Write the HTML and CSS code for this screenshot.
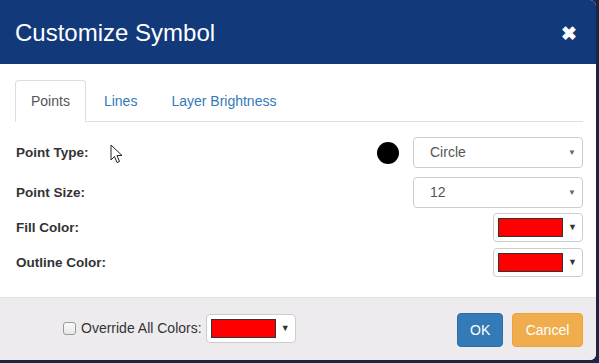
FILE: index.html
```html
<!DOCTYPE html>
<html lang="en">
<head>
    <meta charset="UTF-8">
    <title>Customize Symbol</title>
    <link rel="stylesheet" href="styles.css">
</head>
<body>
    <div class="modal">
        <div class="modal-header">
            <h1>Customize Symbol</h1>
            <span class="close">&#10006;</span>
        </div>

        <div class="modal-body">
            <ul class="tabs">
                <li class="tab active">Points</li>
                <li class="tab">Lines</li>
                <li class="tab">Layer Brightness</li>
            </ul>

            <div class="row row-type">
                <label>Point Type:</label>
                <div class="controls">
                    <span class="dot"></span>
                    <div class="select">Circle<span class="caret">&#9660;</span></div>
                </div>
            </div>
            <div class="row row-size">
                <label>Point Size:</label>
                <div class="select">12<span class="caret">&#9660;</span></div>
            </div>
            <div class="row row-fill">
                <label>Fill Color:</label>
                <div class="picker"><span class="swatch"></span><span class="caret">&#9660;</span></div>
            </div>
            <div class="row row-outline">
                <label>Outline Color:</label>
                <div class="picker"><span class="swatch"></span><span class="caret">&#9660;</span></div>
            </div>
        </div>

        <div class="modal-footer">
            <div class="override">
                <span class="checkbox"></span>
                <span class="override-label">Override All Colors:</span>
                <div class="picker"><span class="swatch"></span><span class="caret">&#9660;</span></div>
            </div>
            <button class="btn btn-ok">OK</button>
            <button class="btn btn-cancel">Cancel</button>
        </div>

        <!-- mouse pointer from the screenshot -->
        <svg class="pointer" width="14" height="22" viewBox="0 0 14 22">
            <path d="M1 1 L1 16 L4.5 12.5 L7 18.5 L9.5 17.5 L7 11.5 L12 11.5 Z" fill="#fff" stroke="#222" stroke-width="1" stroke-linejoin="miter"/>
        </svg>
    </div>
</body>
</html>
```

FILE: styles.css
```css
body {
    margin: 0;
    background-color: #1c2640;
    font-family: "Liberation Sans", Arial, sans-serif;
    width: 599px;
    height: 363px;
    overflow: hidden;
}
.modal {
    position: relative;
    width: 596px;
    height: 360px;
    background-color: white;
    border-radius: 0 6px 6px 0;
    overflow: hidden;
}
.modal-header {
    height: 64px;
    background-color: #12397a;
    display: flex;
    align-items: center;
    justify-content: space-between;
    padding: 0 19px 0 15px;
    box-sizing: border-box;
}
.modal-header h1 {
    margin: 0;
    color: white;
    font-weight: normal;
    font-size: 24px;
    padding-top: 1px;
}
.close {
    color: white;
    font-size: 19px;
    font-weight: bold;
    padding-top: 3px;
}
.modal-body {
    height: 233px;
    padding: 16px 13px 0 15px;
    box-sizing: border-box;
}
.tabs {
    list-style: none;
    margin: 0;
    padding: 0;
    display: flex;
    border-bottom: 1px solid #ddd;
}
.tab {
    padding: 10px 15px;
    line-height: 20px;
    font-size: 14px;
    color: #337ab7;
    margin-right: 2px;
    margin-bottom: -1px;
    border: 1px solid transparent;
    border-radius: 4px 4px 0 0;
}
.tab.active {
    color: #555;
    background-color: white;
    border-color: #ddd #ddd transparent #ddd;
}
.row {
    display: flex;
    align-items: center;
    justify-content: space-between;
}
.row label {
    font-size: 13.5px;
    font-weight: bold;
    color: #333;
    padding-left: 1px;
    margin-top: -1px;
}
.row-type { margin-top: 15px; }
.row-size { margin-top: 9px; }
.row-fill { margin-top: 5px; }
.row-outline { margin-top: 6px; }
.controls {
    display: flex;
    align-items: center;
}
.dot {
    width: 22px;
    height: 22px;
    border-radius: 50%;
    background-color: black;
    margin-right: 14px;
}
.select {
    position: relative;
    width: 170px;
    height: 31px;
    box-sizing: border-box;
    border: 1px solid #ccc;
    border-radius: 4px;
    padding-left: 16px;
    line-height: 29px;
    font-size: 14px;
    color: #555;
}
.select .caret {
    position: absolute;
    right: 6px;
    top: 0;
    font-size: 8px;
    color: #666;
}
.picker {
    position: relative;
    width: 90px;
    height: 29px;
    box-sizing: border-box;
    border: 1px solid #ccc;
    border-radius: 4px;
    background-color: white;
}
.swatch {
    position: absolute;
    left: 4px;
    top: 4px;
    width: 65px;
    height: 19px;
    box-sizing: border-box;
    border: 1px solid #333;
    background-color: #ff0000;
}
.picker .caret {
    position: absolute;
    right: 5px;
    top: 9px;
    font-size: 9px;
    line-height: 9px;
    color: #333;
}
.modal-footer {
    height: 63px;
    background-color: #eeebef;
    border-top: 1px solid #e3e3e3;
    display: flex;
    align-items: flex-start;
    padding: 15px 13px 0 63px;
    box-sizing: border-box;
}
.override {
    display: flex;
    align-items: center;
    height: 30px;
}
.checkbox {
    width: 11px;
    height: 11px;
    border: 1px solid #999;
    border-radius: 3px;
    background: linear-gradient(#fcfcfc, #e6e6e6);
    margin-right: 5px;
}
.override-label {
    font-size: 14px;
    color: #333;
    margin-right: 4px;
}
.btn {
    height: 34px;
    font-family: "Liberation Sans", Arial, sans-serif;
    font-size: 14px;
    color: white;
    border-radius: 4px;
    border: 1px solid transparent;
    padding: 0 12px;
}
.btn-ok {
    margin-left: auto;
    width: 46px;
    background-color: #337ab7;
    border-color: #2e6da4;
}
.btn-cancel {
    margin-left: 9px;
    width: 71px;
    background-color: #f0ad4e;
    border-color: #eea236;
}
.pointer {
    position: absolute;
    left: 110px;
    top: 144px;
}
```
